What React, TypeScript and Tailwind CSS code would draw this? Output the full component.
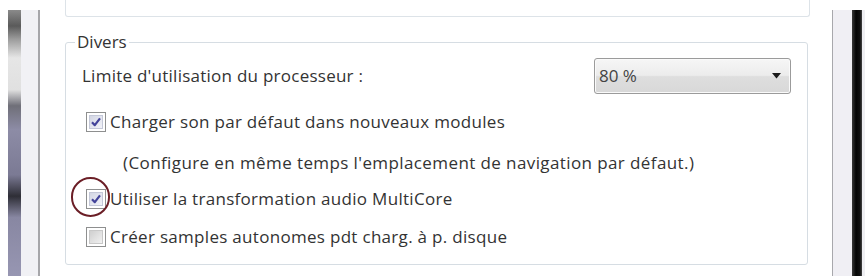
import React from 'react';

const font = { fontFamily: '"Open Sans", "Noto Sans", sans-serif' };

function CheckBox({ checked }: { checked: boolean }) {
  return (
    <div className="flex h-[20px] w-[20px] shrink-0 items-center justify-center border border-[#8e8f8f] bg-white p-[2px]">
      <div
        className={
          checked
            ? 'flex h-full w-full items-center justify-center border border-[#c4c8d8] bg-[linear-gradient(135deg,#d3d6e4,#f2f3f9)]'
            : 'h-full w-full border border-[#c8c8c8] bg-[linear-gradient(135deg,#cfcfcf,#f1f1f1)]'
        }
      >
        {checked && (
          <svg width="12" height="12" viewBox="0 0 12 12">
            <path d="M2 6.2 L4.8 9.2 L10 2.4" fill="none" stroke="#43439a" strokeWidth="2.2" strokeLinejoin="round" />
          </svg>
        )}
      </div>
    </div>
  );
}

function CheckRow({ checked, label, circled }: { checked: boolean; label: string; circled?: boolean }) {
  return (
    <div className="flex h-[24px] items-center pl-[4px]">
      <div className="relative">
        <CheckBox checked={checked} />
        {circled && (
          <div className="absolute left-[-15px] top-[-12px] h-[40px] w-[39px] rounded-full border-2 border-[#6b1e26]" />
        )}
      </div>
      <span className="ml-[4px] whitespace-nowrap tracking-[0.3px]">{label}</span>
    </div>
  );
}

export default function App() {
  return (
    <div className="flex h-[276px] w-[865px] overflow-hidden bg-white text-[17px] text-[#333333]" style={font}>
      {/* left window edge */}
      <div className="w-[8px] shrink-0" />
      <div className="mt-[10px] w-[13px] shrink-0 bg-[linear-gradient(180deg,#8a8a8a_0%,#5a5a5a_6%,#9c9c9c_11%,#e6e6e6_18%,#e0e0e0_30%,#6f6f78_36%,#8d8ca6_45%,#7b7a94_62%,#2e2e36_70%,#8887a2_78%,#9796b2_100%)]" />
      <div className="mt-[10px] w-[17px] shrink-0 bg-[#f1f1f5]" />
      <div className="mt-[10px] w-[2px] shrink-0 bg-[#a6a6aa]" />

      {/* content */}
      <div className="flex flex-1 flex-col pl-[25px] pr-[22px]">
        <div className="h-[17px] rounded-b-[3px] border-x border-b border-[#dde3e8]" />

        <div className="relative mt-[25px] mr-[2px] flex h-[223px] flex-col rounded-[3px] border border-[#d6dde3] px-[16px] pt-[15px]">
          <span className="absolute left-[9px] top-[-11px] bg-white px-[2px] leading-[20px]">Divers</span>

          <div className="flex h-[36px] items-center justify-between">
            <span className="whitespace-nowrap tracking-[0.25px]">Limite d'utilisation du processeur :</span>
            <div className="flex h-[36px] w-[197px] items-center justify-between rounded-[3px] border border-[#9b9b9b] bg-[linear-gradient(180deg,#f6f6f6_0%,#ececec_48%,#dedede_52%,#d8d8d8_100%)] pl-[4px] pr-[9px] shadow-[inset_0_0_0_1px_#fafafa]">
              <span className="text-[#444]">80 %</span>
              <svg width="9" height="6" viewBox="0 0 9 6">
                <path d="M0 0 H9 L4.5 5.5 Z" fill="#1a1a1a" />
              </svg>
            </div>
          </div>

          <div className="mt-[16px]">
            <CheckRow checked label="Charger son par défaut dans nouveaux modules" />
          </div>
          <div className="mt-[17px] flex h-[24px] items-center pl-[41px] whitespace-nowrap tracking-[0.4px]">
            (Configure en même temps l'emplacement de navigation par défaut.)
          </div>
          <div className="mt-[12px]">
            <CheckRow checked circled label="Utiliser la transformation audio MultiCore" />
          </div>
          <div className="mt-[14px]">
            <CheckRow checked={false} label="Créer samples autonomes pdt charg. à p. disque" />
          </div>
        </div>
      </div>

      {/* right window edge */}
      <div className="mt-[10px] w-[1px] shrink-0 bg-[#a8a8ac]" />
      <div className="mt-[10px] w-[19px] shrink-0 bg-[#f0eff4]" />
      <div className="mt-[10px] w-[10px] shrink-0 bg-[linear-gradient(90deg,#3a3a3a,#050505_40%,#111_80%,#444)]" />
      <div className="mt-[10px] w-[3px] shrink-0 bg-[#eeeef2]" />
    </div>
  );
}
